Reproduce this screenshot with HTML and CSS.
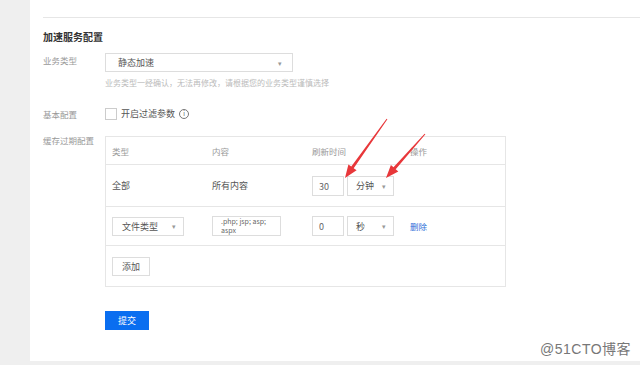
FILE: index.html
```html
<!DOCTYPE html>
<html lang="zh">
<head>
  <meta charset="UTF-8" />
  <title>加速服务配置</title>
  <link rel="stylesheet" href="styles.css">
</head>
<body>

  <div class="pagina">
    <div class="pannello">
      <div class="linea-top"></div>

      <h3 class="titolo">加速服务配置</h3>

      <div class="riga riga-tipo">
        <div class="etichetta">业务类型</div>
        <div class="campo">
          <div class="tendina tendina-larga">
            <span>静态加速</span><span class="freccia">▾</span>
          </div>
          <div class="aiuto">业务类型一经确认，无法再修改，请根据您的业务类型谨慎选择</div>
        </div>
      </div>

      <div class="riga riga-base">
        <div class="etichetta">基本配置</div>
        <div class="campo campo-check">
          <span class="casella"></span>
          <span class="testo-check">开启过滤参数</span>
          <span class="info">i</span>
        </div>
      </div>

      <div class="riga riga-cache">
        <div class="etichetta">缓存过期配置</div>
        <div class="tabella">
          <div class="tab-riga tab-testa">
            <div>类型</div><div>内容</div><div>刷新时间</div><div>操作</div>
          </div>
          <div class="tab-riga tab-uno">
            <div>全部</div>
            <div>所有内容</div>
            <div class="tempo">
              <span class="input-num">30</span>
              <span class="tendina tendina-unita"><span>分钟</span><span class="freccia">▾</span></span>
            </div>
            <div></div>
          </div>
          <div class="tab-riga tab-due">
            <div><span class="tendina tendina-tipo"><span>文件类型</span><span class="freccia">▾</span></span></div>
            <div><span class="area">.php; jsp; asp;<br>aspx</span></div>
            <div class="tempo">
              <span class="input-num">0</span>
              <span class="tendina tendina-unita"><span>秒</span><span class="freccia">▾</span></span>
            </div>
            <div><a class="link">删除</a></div>
          </div>
          <div class="tab-aggiungi">
            <button class="bottone-bianco">添加</button>
          </div>
        </div>
      </div>

      <div class="riga riga-invio">
        <div class="etichetta"></div>
        <button class="bottone-blu">提交</button>
      </div>
    </div>
  </div>

  <svg class="frecce" viewBox="0 0 640 365" width="640" height="365">
    <polygon fill="#e8373a" points="386.6,118.7 351.3,166.5 348.4,164.5 345,178 356.6,170.3 353.7,168.3 387.4,119.3"/>
    <polygon fill="#e8373a" points="424.6,133.7 393.5,167.3 390.9,165 386,178 398.3,171.6 395.7,169.3 425.4,134.3"/>
  </svg>

  <div class="filigrana">@51CTO博客</div>

</body>
</html>
```

FILE: styles.css
```css
html, body {
  margin: 0;
  padding: 0;
  width: 640px;
  height: 365px;
  overflow: hidden;
  background: #efefef;
  font-family: "Noto Sans CJK SC", "Noto Sans", sans-serif;
  color: #555;
  font-size: 9px;
}

.pagina {
  padding-left: 30px;
}

.pannello {
  background: #fff;
  height: 361px;
  padding-left: 13px;
  box-sizing: border-box;
}

.linea-top {
  height: 17px;
  border-bottom: 1px solid #e6e6e6;
}

.titolo {
  margin: 12px 0 0;
  height: 14px;
  line-height: 14px;
  font-size: 10px;
  font-weight: bold;
  color: #333;
}

.riga {
  display: flex;
}

.etichetta {
  width: 62px;
  flex: none;
  color: #999;
  font-size: 8.5px;
}

.riga-tipo {
  margin-top: 9px;
}

.riga-tipo .etichetta {
  line-height: 14px;
}

.tendina {
  display: flex;
  align-items: center;
  justify-content: space-between;
  border: 1px solid #ddd;
  box-sizing: border-box;
  background: #fff;
  color: #555;
}

.freccia {
  color: #999;
  font-size: 7px;
}

.tendina-larga {
  width: 188px;
  height: 19px;
  padding: 0 10px 0 12px;
}

.aiuto {
  margin-top: 6px;
  color: #bbb;
  font-size: 8px;
  line-height: 10px;
}

.riga-base {
  margin-top: 19px;
  align-items: center;
}

.campo-check {
  display: flex;
  align-items: center;
  gap: 4px;
  color: #555;
}

.casella {
  width: 10px;
  height: 10px;
  border: 1px solid #ccc;
}

.testo-check {
  font-size: 9px;
}

.info {
  width: 8px;
  height: 8px;
  border: 1px solid #777;
  border-radius: 50%;
  font-size: 6px;
  line-height: 8px;
  text-align: center;
  color: #555;
}

.riga-cache {
  margin-top: 16px;
}

.riga-cache .etichetta {
  margin-top: -2px;
}

.tabella {
  width: 401px;
  border: 1px solid #e6e6e6;
  box-sizing: border-box;
}

.tab-riga {
  display: grid;
  grid-template-columns: 100px 100px 98px 1fr;
  align-items: center;
  border-bottom: 1px solid #e6e6e6;
}

.tab-riga > div {
  padding-left: 6px;
}

.tab-testa {
  height: 27px;
  color: #999;
  font-size: 8.5px;
}

.tab-uno {
  height: 41px;
}

.tab-due {
  height: 38px;
}

.tempo {
  display: flex;
  gap: 3px;
}

.input-num {
  width: 32px;
  height: 20px;
  line-height: 20px;
  border: 1px solid #ddd;
  box-sizing: border-box;
  padding-left: 6px;
  color: #666;
}

.tendina-unita {
  width: 47px;
  height: 20px;
  padding: 0 7px 0 8px;
}

.tendina-tipo {
  width: 72px;
  height: 19px;
  padding: 0 7px 0 9px;
}

.area {
  display: block;
  width: 69px;
  height: 20px;
  border: 1px solid #ddd;
  box-sizing: border-box;
  padding: 0 8px;
  font-size: 7px;
  line-height: 9px;
  color: #666;
  overflow: hidden;
}

.link {
  color: #2f6fd8;
  font-size: 8.5px;
}

.tab-aggiungi {
  height: 40px;
  padding-left: 6px;
  display: flex;
  align-items: center;
}

.bottone-bianco {
  width: 38px;
  height: 19px;
  border: 1px solid #ddd;
  background: #fff;
  font-family: inherit;
  font-size: 9px;
  color: #555;
  padding: 0;
}

.riga-invio {
  margin-top: 24px;
}

.bottone-blu {
  width: 44px;
  height: 19px;
  border: none;
  background: #0a6ef0;
  color: #fff;
  font-family: inherit;
  font-size: 9px;
  padding: 0;
}

.frecce {
  position: absolute;
  top: 0;
  left: 0;
  pointer-events: none;
}

.filigrana {
  position: absolute;
  left: 540px;
  top: 338px;
  font-family: "Liberation Sans", "Noto Sans CJK SC", sans-serif;
  font-size: 14px;
  letter-spacing: 0.5px;
  color: #777;
}
```
